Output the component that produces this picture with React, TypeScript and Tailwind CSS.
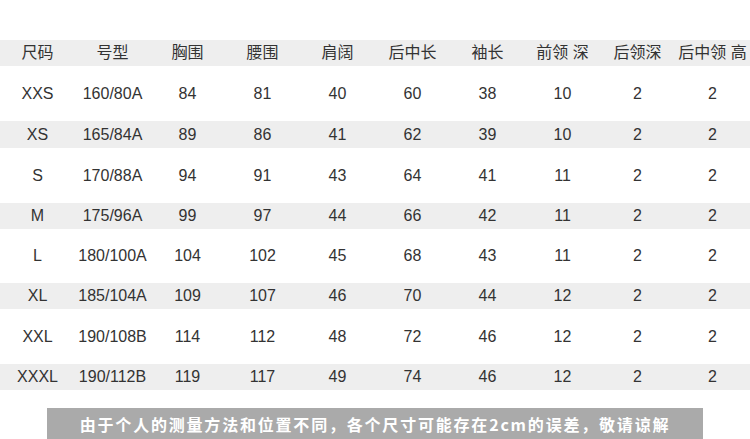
const HEADERS = ['尺码', '号型', '胸围', '腰围', '肩阔', '后中长', '袖长', '前领 深', '后领深', '后中领 高']

const ROWS: { cells: string[]; h: string; shade: boolean }[] = [
  { cells: ['XXS', '160/80A', '84', '81', '40', '60', '38', '10', '2', '2'], h: 'h-[55px]', shade: false },
  { cells: ['XS', '165/84A', '89', '86', '41', '62', '39', '10', '2', '2'], h: 'h-[27px]', shade: true },
  { cells: ['S', '170/88A', '94', '91', '43', '64', '41', '11', '2', '2'], h: 'h-[55px]', shade: false },
  { cells: ['M', '175/96A', '99', '97', '44', '66', '42', '11', '2', '2'], h: 'h-[26px]', shade: true },
  { cells: ['L', '180/100A', '104', '102', '45', '68', '43', '11', '2', '2'], h: 'h-[54px]', shade: false },
  { cells: ['XL', '185/104A', '109', '107', '46', '70', '44', '12', '2', '2'], h: 'h-[26px]', shade: true },
  { cells: ['XXL', '190/108B', '114', '112', '48', '72', '46', '12', '2', '2'], h: 'h-[55px]', shade: false },
  { cells: ['XXXL', '190/112B', '119', '117', '49', '74', '46', '12', '2', '2'], h: 'h-[26px]', shade: true },
]

export default function App() {
  return (
    <div className="w-[750px] h-[439px] bg-white overflow-hidden text-[#333] font-['Liberation_Sans','Noto_Sans_CJK_SC',sans-serif]">
      <div className="pt-[40px]">
        <div className="grid grid-cols-10 h-[26px] bg-[#eeeeee] text-[16px] leading-none">
          {HEADERS.map(h => (
            <div key={h} className="flex items-center justify-center whitespace-pre">{h}</div>
          ))}
        </div>
        {ROWS.map(r => (
          <div key={r.cells[0]} className={`grid grid-cols-10 ${r.h} ${r.shade ? 'bg-[#eeeeee]' : 'bg-white'} text-[16px] leading-none`}>
            {r.cells.map((c, i) => (
              <div key={i} className="flex items-center justify-center">{c}</div>
            ))}
          </div>
        ))}
      </div>
      <div className="mt-[18px] ml-[47px] w-[656px] h-[31px] bg-[#aaaaaa] flex items-center justify-center">
        <span className="text-white font-bold text-[16px] tracking-[1.8px] leading-none font-['Noto_Sans_CJK_SC',sans-serif]">
          由于个人的测量方法和位置不同，各个尺寸可能存在2cm的误差，敬请谅解
        </span>
      </div>
    </div>
  )
}
